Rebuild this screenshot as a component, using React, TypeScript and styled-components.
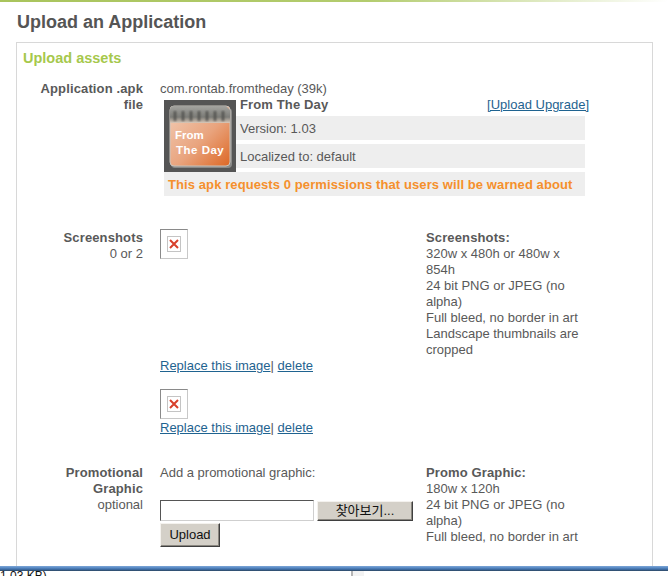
import React from "react";
import styled, { createGlobalStyle } from "styled-components";

const Global = createGlobalStyle`
  html, body { margin: 0; padding: 0; background: #fff; height: 576px; overflow: hidden; }
  #root { height: 576px; }
`;

const Page = styled.div`
  height: 576px;
  display: flex;
  flex-direction: column;
  font-family: "Liberation Sans", Arial, sans-serif;
  font-size: 13px;
  line-height: 16px;
  color: #595959;
`;

const TopRule = styled.div`
  flex: none;
  height: 2px;
  background: linear-gradient(90deg, #a9c45c 0%, #b3cc6e 55%, #ffffff 100%);
`;

const Main = styled.main`
  flex: 1;
  min-height: 0;
  overflow: hidden;
  padding: 0 15px 0 16px;
`;

const Title = styled.h1`
  margin: 0;
  height: 40px;
  padding-left: 1px;
  font-size: 18px;
  line-height: 40px;
  font-weight: bold;
  color: #555555;
`;

const Panel = styled.section`
  height: 100%;
  box-sizing: border-box;
  border: 1px solid #d8d8d8;
  border-bottom: 0;
  padding: 6px 0 0 6px;
`;

const PanelTitle = styled.h2`
  margin: 0 0 13px;
  font-size: 14.5px;
  line-height: 18px;
  font-weight: bold;
  color: #a6c84c;
`;

const Row = styled.div<{ $bottom: number }>`
  display: grid;
  grid-template-columns: 120px 249px 170px;
  column-gap: 17px;
  padding-bottom: ${(p) => p.$bottom}px;
`;

const Label = styled.div`
  padding-top: 1px;
  text-align: right;
`;

const LabelName = styled.div`
  font-weight: bold;
  letter-spacing: 0.13px;
`;

const Wide = styled.div`
  grid-column: 2 / 4;
`;

const PackageLine = styled.div`
  height: 16px;
  padding-top: 1px;
  box-sizing: border-box;
  line-height: 16px;
`;

const AppDetail = styled.div`
  margin-left: 4px;
  width: 421px;
  display: grid;
  grid-template-columns: 72px 349px;
  grid-template-rows: 16px 24px 24px 24px;
  row-gap: 4px;
`;

const AppIcon = styled.svg`
  grid-column: 1;
  grid-row: 1 / 4;
  margin-top: 4px;
  display: block;
`;

const AppHead = styled.div`
  grid-column: 2;
  grid-row: 1;
  display: flex;
  justify-content: space-between;
  padding: 1px 0 0 4px;
  margin-right: -4px;
`;

const AppName = styled.span`
  font-weight: bold;
  letter-spacing: 0.13px;
`;

const Band = styled.div`
  grid-column: 2;
  background: #eeeeee;
  padding-left: 4px;
  line-height: 25px;
  height: 24px;
`;

const Warning = styled.div`
  grid-column: 1 / 3;
  grid-row: 4;
  background: #eeeeee;
  padding-left: 4px;
  line-height: 25px;
  height: 24px;
  font-weight: bold;
  letter-spacing: 0.09px;
  color: #f5902c;
`;

const Slot = styled.div<{ $height: number }>`
  height: ${(p) => p.$height}px;
`;

const Broken = styled.div`
  width: 28px;
  height: 30px;
  box-sizing: border-box;
  border: 1px solid;
  border-color: #8a8a8a #c8c8c8 #c8c8c8 #8a8a8a;
  display: flex;
  align-items: center;
  justify-content: center;
`;

const Link = styled.a`
  color: #1f6390;
  text-decoration: underline;
  cursor: pointer;
`;

const Actions = styled.div`
  white-space: nowrap;
`;

const Note = styled.div`
  width: 165px;
  padding-top: 1px;
`;

const NoteTitle = styled.div`
  font-weight: bold;
  letter-spacing: 0.13px;
`;

const Prompt = styled.div`
  padding-top: 1px;
  margin-bottom: 19px;
`;

const FileLine = styled.div`
  display: flex;
  align-items: flex-end;
  gap: 3px;
  width: 260px;
`;

const PathInput = styled.input`
  width: 154px;
  height: 21px;
  box-sizing: border-box;
  margin: 0;
  padding: 1px 2px;
  background: #fff;
  border: 1px solid;
  border-color: #555555 #cfcfcf #cfcfcf #555555;
  outline: none;
`;

const ClassicButton = styled.button<{ $width: number; $height: number }>`
  display: block;
  width: ${(p) => p.$width}px;
  height: ${(p) => p.$height}px;
  box-sizing: border-box;
  margin: 0;
  padding: 0;
  background: #d4d0c8;
  border: 1px solid;
  border-color: #f4f2ee #3f3f3f #3f3f3f #f4f2ee;
  box-shadow: inset -1px -1px 0 #8a8780;
  color: #111111;
  font-family: "Liberation Sans", "Noto Sans CJK KR", sans-serif;
  font-size: 13px;
  line-height: 16px;
`;

const UploadSpace = styled.div`
  margin-top: 2px;
`;

const BlueRule = styled.div`
  flex: none;
  height: 5px;
  background: linear-gradient(180deg, #7ea6d6 0%, #5e8fc8 30%, #3f6fa8 65%, #2c4660 100%);
`;

const StatusBar = styled.div`
  flex: none;
  height: 5px;
  overflow: hidden;
  position: relative;
  background: #fff;
`;

const StatusText = styled.div`
  margin-top: -2px;
  font-size: 12px;
  line-height: 14px;
  color: #111;
`;

const StatusDivider = styled.div`
  position: absolute;
  left: 351px;
  top: 0;
  width: 11px;
  height: 5px;
  background: #f3f3f3;
  border-left: 2px solid #b5b5b5;
`;

const BrokenGlyph = () => (
  <svg width="14" height="16" viewBox="0 0 14 16">
    <rect x="0.5" y="0.5" width="13" height="15" fill="#fff" stroke="#c4c4c4" />
    <path d="M3 4 L11 12 M11 4 L3 12" stroke="#d8402c" strokeWidth="2" />
  </svg>
);

const CalendarIcon = () => (
  <AppIcon width="72" height="72" viewBox="0 0 72 72">
    <defs>
      <linearGradient id="paper" x1="0" y1="0" x2="1" y2="1">
        <stop offset="0" stopColor="#f2cdb6" />
        <stop offset="0.55" stopColor="#e9a47e" />
        <stop offset="1" stopColor="#dd6724" />
      </linearGradient>
      <linearGradient id="rings" x1="0" y1="0" x2="0" y2="1">
        <stop offset="0" stopColor="#a4a4a0" />
        <stop offset="0.65" stopColor="#7d7d79" />
        <stop offset="1" stopColor="#d9c8b8" />
      </linearGradient>
      <filter id="soft" x="-10%" y="-10%" width="120%" height="120%">
        <feGaussianBlur stdDeviation="0.8" />
      </filter>
    </defs>
    <rect width="72" height="72" fill="#555555" />
    <rect x="7" y="8" width="61" height="60" rx="4" fill="#8a8a88" />
    <rect x="6" y="6" width="60" height="60" rx="4" fill="url(#paper)" stroke="#c9c4bd" strokeWidth="1" />
    <path d="M6 23 L6 10 Q6 6 10 6 L62 6 L66 10 L66 23 Z" fill="url(#rings)" />
    <g stroke="#4f4f4c" strokeWidth="2.4" filter="url(#soft)">
      <path d="M11 11 V21 M19 11 V21 M27 11 V21 M35 11 V21 M43 11 V21 M51 11 V21 M59 11 V21" />
    </g>
    <g fontFamily="'Liberation Sans', sans-serif" fontWeight="bold" fontSize="11.5" fill="#ffffff">
      <text x="11" y="39">From</text>
      <text x="12" y="54" letterSpacing="0.5">The Day</text>
    </g>
  </AppIcon>
);

export default function App() {
  return (
    <Page>
      <Global />
      <TopRule />
      <Main>
        <Title>Upload an Application</Title>
        <Panel>
          <PanelTitle>Upload assets</PanelTitle>
          <Row $bottom={33}>
            <Label>
              <LabelName>Application .apk file</LabelName>
            </Label>
            <Wide>
              <PackageLine>com.rontab.fromtheday (39k)</PackageLine>
              <AppDetail>
                <CalendarIcon />
                <AppHead>
                  <AppName>From The Day</AppName>
                  <Link>[Upload Upgrade]</Link>
                </AppHead>
                <Band>Version: 1.03</Band>
                <Band>Localized to: default</Band>
                <Warning>This apk requests 0 permissions that users will be warned about</Warning>
              </AppDetail>
            </Wide>
          </Row>
          <Row $bottom={28}>
            <Label>
              <LabelName>Screenshots</LabelName>
              0 or 2
            </Label>
            <div>
              <Slot $height={129}>
                <Broken>
                  <BrokenGlyph />
                </Broken>
              </Slot>
              <Actions>
                <Link>Replace this image</Link>| <Link>delete</Link>
              </Actions>
              <Slot $height={15} />
              <Slot $height={31}>
                <Broken>
                  <BrokenGlyph />
                </Broken>
              </Slot>
              <Actions>
                <Link>Replace this image</Link>| <Link>delete</Link>
              </Actions>
            </div>
            <Note>
              <NoteTitle>Screenshots:</NoteTitle>
              320w x 480h or 480w x 854h
              <br />
              24 bit PNG or JPEG (no alpha)
              <br />
              Full bleed, no border in art
              <br />
              Landscape thumbnails are cropped
            </Note>
          </Row>
          <Row $bottom={0}>
            <Label>
              <LabelName>Promotional Graphic</LabelName>
              optional
            </Label>
            <div>
              <Prompt>Add a promotional graphic:</Prompt>
              <FileLine>
                <PathInput type="text" readOnly aria-label="File path" />
                <ClassicButton type="button" $width={96} $height={20}>찾아보기...</ClassicButton>
              </FileLine>
              <UploadSpace>
                <ClassicButton type="button" $width={60} $height={24}>Upload</ClassicButton>
              </UploadSpace>
            </div>
            <Note>
              <NoteTitle>Promo Graphic:</NoteTitle>
              180w x 120h
              <br />
              24 bit PNG or JPEG (no alpha)
              <br />
              Full bleed, no border in art
            </Note>
          </Row>
        </Panel>
      </Main>
      <BlueRule />
      <StatusBar>
        <StatusText>1.03 KB)</StatusText>
        <StatusDivider />
      </StatusBar>
    </Page>
  );
}
